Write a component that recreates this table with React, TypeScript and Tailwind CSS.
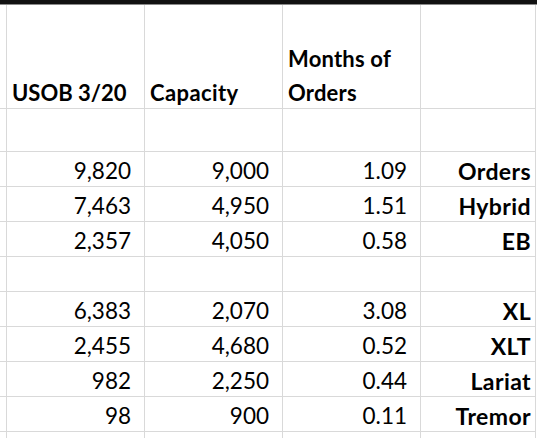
import React from "react";

const rows: (string[] | null)[] = [
  null,
  ["9,820", "9,000", "1.09", "Orders"],
  ["7,463", "4,950", "1.51", "Hybrid"],
  ["2,357", "4,050", "0.58", "EB"],
  null,
  ["6,383", "2,070", "3.08", "XL"],
  ["2,455", "4,680", "0.52", "XLT"],
  ["982", "2,250", "0.44", "Lariat"],
  ["98", "900", "0.11", "Tremor"],
];

const cell = "border-r border-b border-[#d9d9d9]";

export default function App() {
  return (
    <div
      className="w-[537px] h-[438px] overflow-hidden bg-white text-black"
      style={{ fontFamily: "Lato, 'Open Sans', sans-serif" }}
    >
      <div className="h-[4px] bg-[#111111]" />
      <div className="h-[1px] bg-[#8a8a8a]" />
      <div className="grid grid-cols-[7px_138px_138px_138px_115px_1px] text-[22.5px]">
        {/* header row */}
        <div className={`${cell} h-[104px]`} />
        <div className={`${cell} h-[104px] flex items-end pl-[5px]`}>
          <span className="font-bold text-[22px] leading-[34px] -mb-[2px] whitespace-nowrap">USOB 3/20</span>
        </div>
        <div className={`${cell} h-[104px] flex items-end pl-[5px]`}>
          <span className="font-bold text-[22px] tracking-[0.4px] leading-[34px] -mb-[2px] whitespace-nowrap">Capacity</span>
        </div>
        <div className={`${cell} h-[104px] flex items-end pl-[5px]`}>
          <span className="font-bold text-[22px] tracking-[0.2px] leading-[34px] -mb-[2px]">
            Months of
            <br />
            Orders
          </span>
        </div>
        <div className={`${cell} h-[104px]`} />
        <div className="h-[104px]" />

        {rows.map((r, i) => {
          const h = i === 0 ? "h-[43px]" : "h-[35px]";
          return (
            <React.Fragment key={i}>
              <div className={`${cell} ${h}`} />
              {[0, 1, 2].map((c) => (
                <div key={c} className={`${cell} ${h} flex items-end justify-end pr-[13px] pb-[2px]`}>
                  <span className="leading-[26px]">{r ? r[c] : ""}</span>
                </div>
              ))}
              <div className={`${cell} ${h} flex items-end justify-end pr-[4px] pb-[2px]`}>
                <span className="leading-[26px] font-bold text-[23px] tracking-[0.4px]">{r ? r[3] : ""}</span>
              </div>
              <div className={h} />
            </React.Fragment>
          );
        })}
        <div className={`${cell} h-[35px]`} />
        <div className={`${cell} h-[35px]`} />
        <div className={`${cell} h-[35px]`} />
        <div className={`${cell} h-[35px]`} />
        <div className={`${cell} h-[35px]`} />
        <div className="h-[35px]" />
      </div>
    </div>
  );
}
